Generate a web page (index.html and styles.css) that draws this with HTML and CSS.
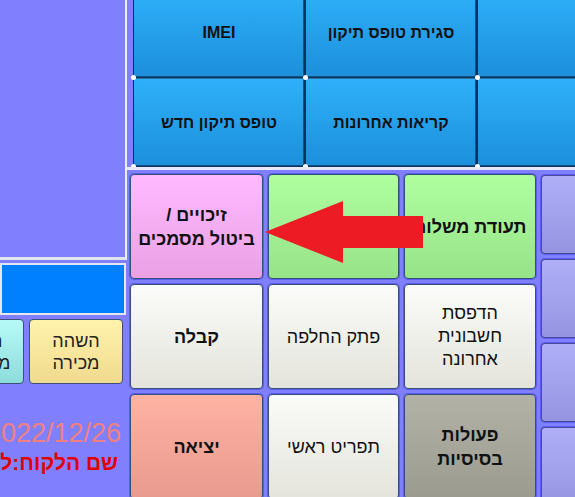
FILE: index.html
```
<!DOCTYPE html>
<html lang="he">
<head>
<meta charset="utf-8">
<link rel="stylesheet" href="styles.css">
</head>
<body>
<div class="app">
  <aside class="left">
    <div class="list"></div>
    <div class="field"></div>
    <div class="actions">
      <div class="abtn cyan" dir="rtl">החזרת<br>מחירונים</div>
      <div class="abtn yellow" dir="rtl">השהה<br>מכירה</div>
    </div>
    <div class="date" dir="rtl">2022/12/26</div>
    <div class="customer" dir="rtl">שם הלקוח:לקוח כללי</div>
  </aside>
  <main class="right">
    <div class="top">
      <div class="topgrid">
        <div class="tbtn" dir="rtl">IMEI</div>
        <div class="tbtn" dir="rtl">סגירת טופס תיקון</div>
        <div class="tbtn"></div>
        <div class="tbtn"></div>
        <div class="tbtn" dir="rtl">טופס תיקון חדש</div>
        <div class="tbtn" dir="rtl">קריאות אחרונות</div>
        <div class="tbtn"></div>
        <div class="tbtn"></div>
      </div>
    </div>
    <div class="bottom">
      <div class="grid3">
        <div class="btn pink bold" dir="rtl">זיכויים /<br>ביטול מסמכים</div>
        <div class="btn green bold" dir="rtl"></div>
        <div class="btn green bold" dir="rtl">תעודת משלוח</div>
        <div class="btn white bold" dir="rtl">קבלה</div>
        <div class="btn white" dir="rtl">פתק החלפה</div>
        <div class="btn white three" dir="rtl">הדפסת<br>חשבונית<br>אחרונה</div>
        <div class="btn salmon bold" dir="rtl">יציאה</div>
        <div class="btn white" dir="rtl">תפריט ראשי</div>
        <div class="btn gray bold" dir="rtl">פעולות<br>בסיסיות</div>
      </div>
      <div class="side">
        <div class="pbtn"></div>
        <div class="pbtn"></div>
        <div class="pbtn"></div>
        <div class="pbtn"></div>
      </div>
    </div>
  </main>
</div>
<svg class="arrow" width="170" height="72" viewBox="260 196 170 72" aria-hidden="true">
  <polygon points="265,232 343,201 343,216 423,216 423,248 343,248 343,263" fill="#ED1C24"/>
</svg>
</body>
</html>
```
FILE: styles.css
```
html, body {
  margin: 0;
  padding: 0;
}
body {
  width: 575px;
  height: 497px;
  overflow: hidden;
  background: #8080ff;
  font-family: "Liberation Sans", "DejaVu Sans", Arial, sans-serif;
  color: #111;
  position: relative;
}
.app {
  display: flex;
  width: 575px;
  height: 497px;
  overflow: hidden;
}
.left {
  width: 127px;
  flex: none;
  display: flex;
  flex-direction: column;
}
.left > * {
  flex: none;
}
.list {
  height: 257px;
  width: 125px;
  border-right: 2px solid #eeeef8;
  border-bottom: 3px solid #e4e4f0;
}
.field {
  margin-top: 3px;
  width: 122px;
  height: 48px;
  background: #0080ff;
  border: 2px solid #e6e6ee;
}
.actions {
  margin-top: 4px;
  display: flex;
  justify-content: flex-end;
  gap: 5px;
  padding-right: 4px;
}
.abtn {
  flex: none;
  width: 94px;
  height: 65px;
  box-sizing: border-box;
  border: 1px solid #3f4f78;
  border-radius: 4px;
  display: flex;
  align-items: center;
  justify-content: center;
  text-align: center;
  font-size: 18px;
  line-height: 22px;
  color: #222;
}
.cyan { background: linear-gradient(#b6faf7, #8ddcdc); }
.yellow { background: linear-gradient(#fff3ac, #f0da8e); }
.date {
  margin-top: 34px;
  width: 121px;
  white-space: nowrap;
  font-size: 27px;
  line-height: 30px;
  color: #f08080;
  text-align: right;
}
.customer {
  margin-top: 3px;
  width: 118px;
  white-space: nowrap;
  font-size: 21px;
  font-weight: bold;
  line-height: 24px;
  color: #e00000;
  text-align: right;
}
.right {
  flex: 1;
  min-width: 0;
  display: flex;
  flex-direction: column;
}
.right > * {
  flex: none;
}
.top {
  padding-left: 6px;
  border-bottom: 3px solid #e8e8ff;
  height: 167px;
  overflow: hidden;
}
.topgrid {
  margin-top: -12px;
  display: grid;
  grid-template-columns: 172px 172px 172px 172px;
  grid-template-rows: 90px 89px;
}
.tbtn {
  position: relative;
  box-sizing: border-box;
  border: 1px solid #0a325c;
  border-top-color: #2a70aa;
  background: linear-gradient(#2fb0fa, #1c8fdb);
  box-shadow: inset -1px -1px 0 #13507f;
  display: flex;
  align-items: center;
  justify-content: center;
  font-size: 16px;
  font-weight: bold;
  color: #111;
}
.tbtn::before {
  content: "";
  position: absolute;
  left: -3px;
  bottom: -3px;
  width: 5px;
  height: 5px;
  border-radius: 50%;
  background: #fff;
  z-index: 1;
}
.bottom {
  margin-top: 4px;
  padding-left: 3px;
  display: flex;
}
.grid3 {
  display: grid;
  grid-template-columns: 133px 131px 132px;
  grid-template-rows: 105px 105px 105px;
  gap: 5px;
  flex: none;
}
.btn {
  box-sizing: border-box;
  border: 1px solid #34507a;
  border-radius: 4px;
  box-shadow: 0 0 0 1px #5c5cf0;
  display: flex;
  align-items: center;
  justify-content: center;
  text-align: center;
  font-size: 18px;
  line-height: 24px;
  color: #111;
}
.bold { font-weight: bold; }
.three { line-height: 23px; }
.pink { background: linear-gradient(#ffbaff, #eba0e4); }
.green { background: linear-gradient(#aefe9e, #97e389); }
.white { background: linear-gradient(#fbfbf9, #e4e4dc); }
.salmon { background: linear-gradient(#ffb3a3, #e89a8e); }
.gray { background: linear-gradient(#b2b3a6, #9b9c8f); }
.side {
  margin-left: 5px;
  margin-top: 1px;
  flex: 1;
  display: flex;
  flex-direction: column;
  gap: 5px;
}
.pbtn {
  height: 79px;
  flex: none;
  box-sizing: border-box;
  border: 1px solid #4a4a9a;
  border-right: none;
  border-radius: 4px 0 0 4px;
  box-shadow: 0 0 0 1px #5c5cf0;
  background: linear-gradient(#afaff8, #9494e1);
}
.arrow {
  position: absolute;
  left: 260px;
  top: 196px;
}
```
